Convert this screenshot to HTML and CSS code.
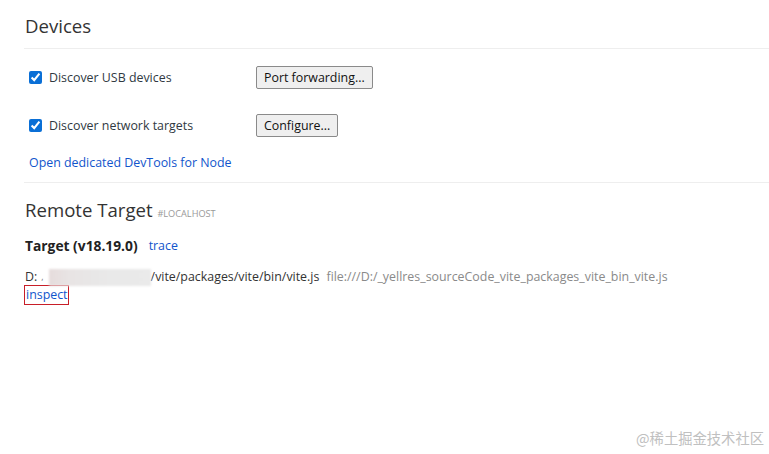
FILE: index.html
```html
<!DOCTYPE html>
<html lang="en">
<head>
  <meta charset="UTF-8">
  <title>Inspect with Chrome Developer Tools</title>
  <link rel="stylesheet" href="styles.css">
</head>
<body>
  <div class="content">
    <div class="section">
      <div class="section-title">Devices</div>
      <div class="device-row">
        <label class="check-label">
          <input type="checkbox" checked>
          <span>Discover USB devices</span>
        </label>
        <button class="action-button">Port forwarding...</button>
      </div>
      <div class="device-row">
        <label class="check-label">
          <input type="checkbox" checked>
          <span>Discover network targets</span>
        </label>
        <button class="action-button">Configure...</button>
      </div>
      <div class="node-link">
        <a href="#">Open dedicated DevTools for Node</a>
      </div>
    </div>

    <div class="section">
      <div class="section-title">
        Remote Target
        <span class="section-sub">#LOCALHOST</span>
      </div>
      <div class="target-head">
        <span class="target-name">Target (v18.19.0)</span>
        <a class="action" href="#">trace</a>
      </div>
      <div class="target-row">
        <span class="target-path">D:<span class="tick">,</span><span class="blurred"></span>/vite/packages/vite/bin/vite.js</span>
        <span class="target-url">file:///D:/_yellres_sourceCode_vite_packages_vite_bin_vite.js</span>
      </div>
      <div class="target-actions">
        <a class="action marked" href="#">inspect</a>
      </div>
    </div>
  </div>

  <div class="watermark">@稀土掘金技术社区</div>
</body>
</html>
```

FILE: styles.css
```css
body {
  margin: 0;
  padding: 0;
  font-family: "Open Sans", "Noto Sans", sans-serif;
  font-size: 12.4px;
  color: #303942;
  background-color: #fff;
}

a {
  color: rgb(17, 85, 204);
  text-decoration: none;
}

.content {
  padding: 12px 0 0 24px;
}

.section-title {
  font-size: 18.6px;
  line-height: 28px;
  color: #333;
  padding-left: 1px;
  padding-bottom: 8px;
  border-bottom: 1px solid #eee;
}

.section:last-child .section-title {
  border-bottom: 0;
  padding-bottom: 0;
}

.section-sub {
  font-size: 9.2px;
  color: #999;
}

.device-row {
  display: flex;
  align-items: center;
  height: 48px;
}

.section-title + .device-row {
  margin-top: 4px;
}

.check-label {
  display: flex;
  align-items: center;
  width: 232px;
}

.check-label input {
  width: 13px;
  height: 13px;
  margin: 0 7px 0 5px;
  accent-color: #0a6fd6;
}

.action-button {
  font-family: "Open Sans", "Noto Sans", sans-serif;
  font-size: 12.4px;
  height: 23px;
  padding: 0 7px;
  color: #111;
  background-color: #efefef;
  border: 1px solid #8a8a8a;
  border-radius: 2px;
}

.node-link {
  line-height: 20px;
  padding: 4px 0 9px 5px;
  border-bottom: 1px solid #eee;
}

.section:last-child {
  padding-top: 13px;
}

.target-head {
  display: flex;
  align-items: center;
  gap: 11px;
  margin-top: 8px;
  padding-left: 1px;
  line-height: 20px;
}

.target-name {
  font-size: 13.8px;
  font-weight: bold;
  color: #222;
}

.target-row {
  display: flex;
  align-items: center;
  gap: 7px;
  margin-top: 11px;
  padding-left: 1px;
  line-height: 20px;
}

.target-path {
  display: flex;
  align-items: center;
  color: #333;
}

.tick {
  font-size: 9px;
  color: #777;
  margin: 0 5px 0 4px;
}

.blurred {
  display: inline-block;
  width: 102px;
  height: 17px;
  background: linear-gradient(to right, #e6dcdc, #e8e4e4 20%, #e9e9e9 60%, #eaeaea);
  filter: blur(1px);
}

.target-url {
  color: #8a8a8a;
}

.target-actions {
  line-height: 18px;
  margin-top: -2px;
}

.marked {
  display: inline-block;
  padding: 0 0 0 1px;
  border: 1px solid #c81e28;
}

.watermark {
  position: absolute;
  right: 5px;
  bottom: 6px;
  font-family: "Noto Sans CJK SC", sans-serif;
  font-size: 14.3px;
  color: #c0c0c0;
}
```
